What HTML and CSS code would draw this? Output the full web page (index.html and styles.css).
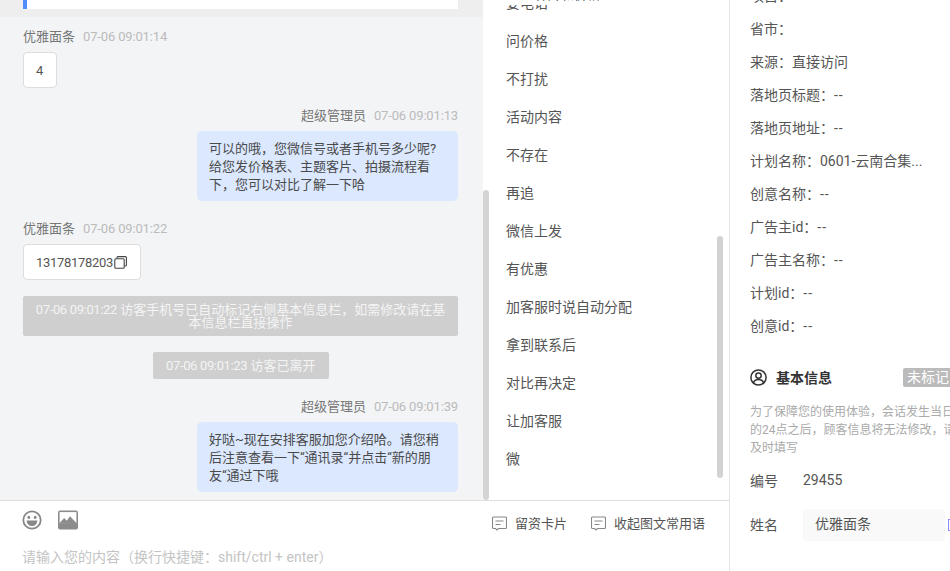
FILE: index.html
```html
<!DOCTYPE html>
<html lang="zh-CN">
<head>
    <meta charset="UTF-8">
    <meta name="viewport" content="width=device-width, initial-scale=1.0">
    <title>会话详情</title>
    <link rel="stylesheet" href="styles.css">
</head>
<body>
    <div class="page">
        <div class="main">
            <div class="main-top">
                <div class="chat-wrap">
                    <div class="chat">
                        <div class="top-band"><div class="top-card"></div></div>

                        <div class="msg msg-first">
                            <div class="msg-head"><span class="msg-name">优雅面条</span><span class="msg-time">07-06 09:01:14</span></div>
                            <div class="bubble-white">4</div>
                        </div>

                        <div class="msg msg-right">
                            <div class="msg-head"><span class="msg-name">超级管理员</span><span class="msg-time">07-06 09:01:13</span></div>
                            <div class="bubble-blue">可以的哦，您微信号或者手机号多少呢?给您发价格表、主题客片、拍摄流程看下，您可以对比了解一下哈</div>
                        </div>

                        <div class="msg">
                            <div class="msg-head"><span class="msg-name">优雅面条</span><span class="msg-time">07-06 09:01:22</span></div>
                            <div class="bubble-white"><span class="phone">13178178203</span><svg class="copy-icon" viewBox="0 0 13 13" fill="none" stroke="#444" stroke-width="1.1"><rect x="0.8" y="2.8" width="9.4" height="9.4" rx="1"/><path d="M3 2.6V1.6a1 1 0 0 1 1-1h7.4a1 1 0 0 1 1 1V9a1 1 0 0 1-1 1h-1"/></svg></div>
                        </div>

                        <div class="system system-wide"><span class="stamp">07-06 09:01:22</span> 访客手机号已自动标记右侧基本信息栏，如需修改请在基本信息栏直接操作</div>
                        <div class="system system-small"><span class="stamp">07-06 09:01:23</span> 访客已离开</div>

                        <div class="msg msg-right">
                            <div class="msg-head"><span class="msg-name">超级管理员</span><span class="msg-time">07-06 09:01:39</span></div>
                            <div class="bubble-blue">好哒~现在安排客服加您介绍哈。请您稍后注意查看一下“通讯录“并点击“新的朋友“通过下哦</div>
                        </div>
                    </div>
                    <div class="chat-track"><div class="chat-thumb"></div></div>
                </div>

                <div class="phrases">
                    <div class="phrases-head"><span>样片和价格</span></div>
                    <div class="phrases-body">
                        <div class="phrase-list">
                            <div class="phrase">要电话</div>
                            <div class="phrase">问价格</div>
                            <div class="phrase">不打扰</div>
                            <div class="phrase">活动内容</div>
                            <div class="phrase">不存在</div>
                            <div class="phrase">再追</div>
                            <div class="phrase">微信上发</div>
                            <div class="phrase">有优惠</div>
                            <div class="phrase">加客服时说自动分配</div>
                            <div class="phrase">拿到联系后</div>
                            <div class="phrase">对比再决定</div>
                            <div class="phrase">让加客服</div>
                            <div class="phrase">微</div>
                        </div>
                        <div class="phrase-thumb"></div>
                    </div>
                </div>
            </div>

            <div class="footer">
                <div class="input-box">
                    <div class="tools">
                        <svg class="tool-icon" viewBox="0 0 20 20">
                            <circle cx="10" cy="10" r="8.7" fill="none" stroke="#888" stroke-width="1.8"/>
                            <ellipse cx="6.8" cy="7.4" rx="1.4" ry="1.7" fill="#888"/>
                            <ellipse cx="13.2" cy="7.4" rx="1.4" ry="1.7" fill="#888"/>
                            <path d="M4.6 10.6h10.8a5.4 5.4 0 0 1-10.8 0z" fill="#888"/>
                        </svg>
                        <svg class="tool-icon" viewBox="0 0 20 19">
                            <rect x="0" y="0" width="20" height="19" rx="2" fill="#8c8c8c"/>
                            <rect x="1.6" y="1.6" width="16.8" height="11" fill="#fff"/>
                            <path d="M1.6 12.6l4.6-5 2.6 2.6 3.2-4.4 6.4 6.8v1z" fill="#8c8c8c"/>
                        </svg>
                    </div>
                    <div class="placeholder">请输入您的内容（换行快捷键：shift/ctrl + enter）</div>
                </div>
                <div class="actions">
                    <div class="action">
                        <svg class="action-icon" viewBox="0 0 15 15" fill="none" stroke="#888" stroke-width="1.1"><path d="M1.5 1h12a1 1 0 0 1 1 1v9.500a1 1 0 0 1-1 1H6.500L5 14l-1.500-1.500h-2a1 1 0 0 1-1-1V2a1 1 0 0 1 1-1z"/><path d="M3.500 5h8M3.500 8.500h5"/></svg>
                        <span>留资卡片</span>
                    </div>
                    <div class="action">
                        <svg class="action-icon" viewBox="0 0 15 15" fill="none" stroke="#888" stroke-width="1.1"><path d="M1.5 1h12a1 1 0 0 1 1 1v9.500a1 1 0 0 1-1 1H6.500L5 14l-1.500-1.500h-2a1 1 0 0 1-1-1V2a1 1 0 0 1 1-1z"/><path d="M3.500 5h8M3.500 8.500h5"/></svg>
                        <span>收起图文常用语</span>
                    </div>
                </div>
            </div>
        </div>

        <div class="side">
            <div class="source-list">
                <div class="source-row">项目：</div>
                <div class="source-row">省市：</div>
                <div class="source-row">来源：直接访问</div>
                <div class="source-row">落地页标题：<span class="dash">--</span></div>
                <div class="source-row">落地页地址：<span class="dash">--</span></div>
                <div class="source-row">计划名称：0601-云南合集...</div>
                <div class="source-row">创意名称：<span class="dash">--</span></div>
                <div class="source-row">广告主id：<span class="dash">--</span></div>
                <div class="source-row">广告主名称：<span class="dash">--</span></div>
                <div class="source-row">计划id：<span class="dash">--</span></div>
                <div class="source-row">创意id：<span class="dash">--</span></div>
            </div>

            <div class="info-head">
                <svg class="user-icon" viewBox="0 0 17 17" fill="none" stroke="#333" stroke-width="1.5"><circle cx="8.500" cy="8.500" r="7.600"/><circle cx="8.500" cy="6.600" r="2.700"/><path d="M3.400 14c.7-2.400 2.700-3.600 5.100-3.600s4.400 1.200 5.100 3.600"/></svg>
                <span class="info-title">基本信息</span>
                <span class="tag">未标记</span>
            </div>
            <p class="info-tip">为了保障您的使用体验，会话发生当日<br>的24点之后，顾客信息将无法修改，请<br>及时填写</p>
            <div class="field field-id">
                <span class="field-label">编号</span>
                <span>29455</span>
            </div>
            <div class="field">
                <span class="field-label field-label-name">姓名</span>
                <div class="field-input">优雅面条</div>
                <span class="field-edit"></span>
            </div>
        </div>
    </div>
</body>
</html>
```

FILE: styles.css
```css
html, body {
    margin: 0;
    height: 100%;
    overflow: hidden;
}
body {
    font-family: Roboto, "Noto Sans CJK SC", sans-serif;
    font-size: 14px;
    color: #555;
    background: #fff;
}
.page {
    display: flex;
    height: 571px;
    width: 950px;
    overflow: hidden;
}
.main {
    width: 729px;
    flex-shrink: 0;
    display: flex;
    flex-direction: column;
}
.main-top {
    display: flex;
    height: 500px;
}

/* chat */
.chat-wrap {
    display: flex;
    width: 490px;
}
.chat {
    width: 483px;
    background: #f3f4f6;
    overflow: hidden;
}
.top-band {
    height: 17px;
    background: #eeeeee;
    padding-left: 23px;
}
.top-card {
    width: 431px;
    height: 9px;
    background: #fff;
    border-left: 4px solid #4f8cff;
}
.chat-track {
    width: 7px;
    padding-top: 190px;
    box-sizing: border-box;
}
.chat-thumb {
    width: 6px;
    height: 310px;
    background: #d4d4d4;
    border-radius: 3px;
}
.msg {
    padding: 19px 25px 0 23px;
}
.msg-first {
    padding-top: 11px;
}
.msg-head {
    height: 16px;
    line-height: 18px;
    font-size: 13px;
    margin-bottom: 8px;
}
.msg-name {
    color: #777;
}
.msg-time {
    color: #bbb;
    margin-left: 8px;
    letter-spacing: -0.15px;
}
.stamp {
    letter-spacing: -0.35px;
}
.msg-right {
    display: flex;
    flex-direction: column;
    align-items: flex-end;
}
.bubble-white {
    display: inline-flex;
    align-items: center;
    height: 36px;
    box-sizing: border-box;
    padding: 0 13px 0 12px;
    background: #fff;
    border: 1px solid #dddddd;
    border-radius: 4px;
    font-size: 13px;
    color: #555;
}
.phone {
    letter-spacing: -0.3px;
}
.copy-icon {
    width: 13px;
    height: 13px;
    margin-left: 1px;
}
.bubble-blue {
    width: 261px;
    height: 70px;
    box-sizing: border-box;
    padding: 9px 16px 7px 12px;
    background: #dbe8fe;
    border-radius: 5px;
    font-size: 13px;
    line-height: 18px;
    color: #4a4a4a;
}
.system {
    margin: 16px 25px 0 23px;
    padding: 7px 10px;
    background: #cfcfcf;
    border-radius: 2px;
    color: #f4f4f4;
    font-size: 13px;
    line-height: 13px;
    text-align: center;
}
.system-small {
    width: fit-content;
    margin-left: 153px;
    padding: 7px 13px;
}

/* common phrases */
.phrases {
    flex: 1;
    display: flex;
    flex-direction: column;
    min-width: 0;
}
.phrases-head {
    height: 2px;
    margin-bottom: 3px;
    padding-left: 45px;
    display: flex;
    align-items: flex-end;
    overflow: hidden;
    line-height: 14px;
    font-size: 13px;
}
.phrases-head span {
    flex-shrink: 0;
}
.phrases-body {
    flex: 1;
    min-height: 0;
    display: flex;
}
.phrase-list {
    flex: 1;
    display: flex;
    flex-direction: column;
    justify-content: flex-end;
    overflow: hidden;
    padding: 0 0 22px 16px;
}
.phrase {
    flex-shrink: 0;
    height: 38px;
    line-height: 38px;
}
.phrase-thumb {
    width: 6px;
    height: 242px;
    margin: 231px 6px 0 0;
    background: #d2d2d2;
    border-radius: 3px;
}

/* footer */
.footer {
    flex: 1;
    display: flex;
    border-top: 1px solid #dedede;
}
.input-box {
    width: 490px;
    padding: 9px 0 0 22px;
    box-sizing: border-box;
}
.tools {
    display: flex;
    gap: 16px;
}
.tool-icon {
    width: 20px;
    height: 20px;
}
.placeholder {
    margin-top: 17px;
    color: #c4c4c4;
    line-height: 20px;
}
.actions {
    display: flex;
    gap: 24px;
    padding: 13px 0 0 2px;
    font-size: 13px;
}
.action {
    display: flex;
    align-items: center;
    gap: 8px;
    height: 17px;
}
.action-icon {
    width: 15px;
    height: 15px;
    margin-top: 2px;
}

/* right side */
.side {
    flex: 1;
    min-width: 0;
    border-left: 1px solid #e6e6e6;
    padding-left: 20px;
    overflow: hidden;
    display: flex;
    flex-direction: column;
}
.source-list {
    height: 343px;
    flex-shrink: 0;
    display: flex;
    flex-direction: column;
    justify-content: flex-end;
    overflow: hidden;
}
.source-row {
    flex-shrink: 0;
    height: 33px;
    line-height: 33px;
    white-space: nowrap;
}
.dash {
    letter-spacing: 1px;
}
.info-head {
    display: flex;
    align-items: center;
    height: 20px;
    margin-top: 24px;
    white-space: nowrap;
}
.user-icon {
    width: 17px;
    height: 17px;
    flex-shrink: 0;
}
.info-title {
    margin-left: 9px;
    font-weight: 700;
    color: #333;
}
.tag {
    flex-shrink: 0;
    margin-left: 71px;
    padding: 0 4px;
    height: 19px;
    line-height: 19px;
    width: 60px;
    background: #bbb;
    color: #fff;
    border-radius: 2px;
}
.info-tip {
    margin: 16px 0 0;
    font-size: 12px;
    line-height: 18px;
    color: #aaa;
    white-space: nowrap;
}
.field {
    display: flex;
    align-items: center;
    white-space: nowrap;
}
.field-id {
    height: 20px;
    margin: 13px 0 19px;
}
.field-label {
    width: 53px;
    flex-shrink: 0;
}
.field-label-name {
    padding-bottom: 2px;
}
.field-input {
    width: 142px;
    height: 32px;
    flex-shrink: 0;
    box-sizing: border-box;
    padding-left: 12px;
    line-height: 30px;
    background: #f9f9f9;
    border-radius: 3px;
    color: #555;
}
.field-edit {
    flex-shrink: 0;
    width: 12px;
    height: 12px;
    box-sizing: border-box;
    margin-left: 3px;
    border: 1px solid #8a8aff;
}
```
